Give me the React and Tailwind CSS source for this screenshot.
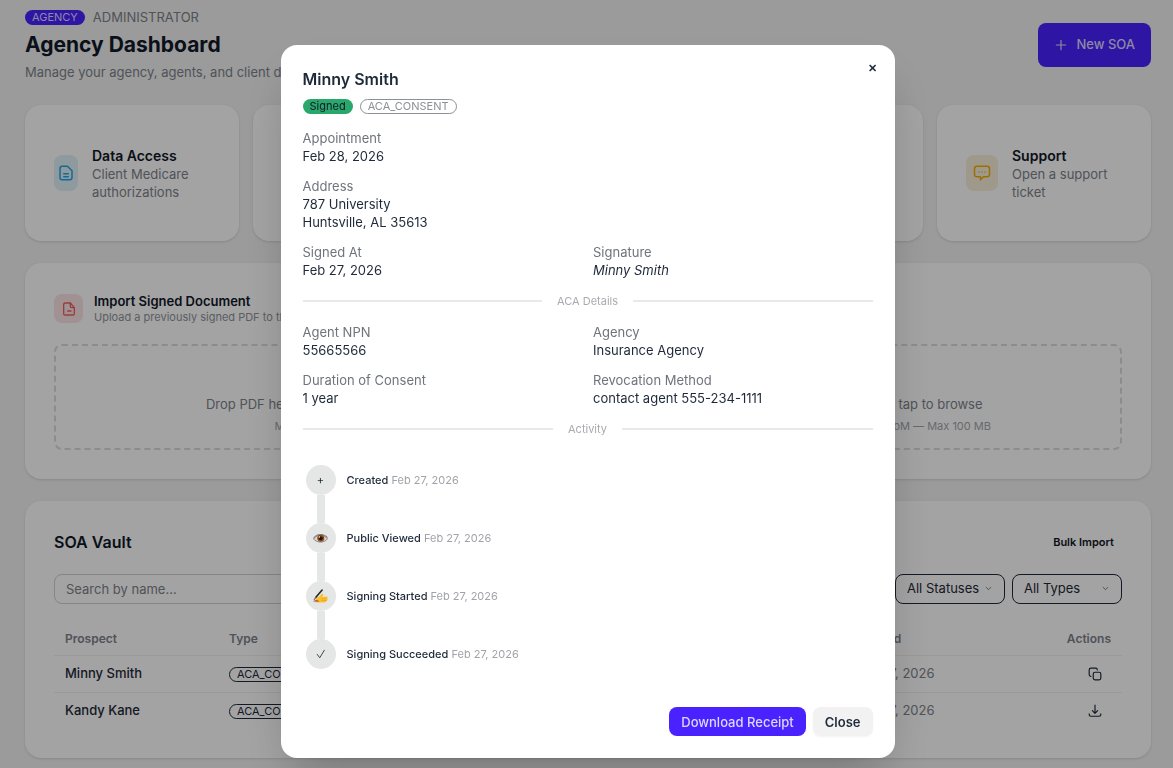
import React, { useState } from "react";

const details = [
  { label: "Signed At", value: "Feb 27, 2026" },
  { label: "Signature", value: "Minny Smith", italic: true },
];

const acaDetails = [
  { label: "Agent NPN", value: "55665566" },
  { label: "Agency", value: "Insurance Agency" },
  { label: "Duration of Consent", value: "1 year" },
  { label: "Revocation Method", value: "contact agent 555-234-1111" },
];

const activity = [
  { name: "Created", date: "Feb 27, 2026", icon: "plus" },
  { name: "Public Viewed", date: "Feb 27, 2026", icon: "eye" },
  { name: "Signing Started", date: "Feb 27, 2026", icon: "hand" },
  { name: "Signing Succeeded", date: "Feb 27, 2026", icon: "check" },
];

const prospects = [
  { name: "Minny Smith", type: "ACA_CONSENT", created: "Feb 27, 2026", action: "copy" },
  { name: "Kandy Kane", type: "ACA_CONSENT", created: "Feb 27, 2026", action: "download" },
];

function StrokeIcon({ children, className }) {
  return (
    <svg
      viewBox="0 0 24 24"
      fill="none"
      stroke="currentColor"
      strokeWidth="2"
      strokeLinecap="round"
      strokeLinejoin="round"
      className={className}
      aria-hidden="true"
    >
      {children}
    </svg>
  );
}

function FileTextIcon() {
  return (
    <StrokeIcon className="size-[18px] shrink-0">
      <path d="M7 3h7l6 6v9a3 3 0 0 1-3 3H7a3 3 0 0 1-3-3V6a3 3 0 0 1 3-3Z" />
      <path d="M9 13h6M9 17h6" />
    </StrokeIcon>
  );
}

function FileMinusIcon() {
  return (
    <StrokeIcon className="size-4 shrink-0">
      <path d="M14 3H6a2 2 0 0 0-2 2v14a2 2 0 0 0 2 2h12a2 2 0 0 0 2-2v-9Z" />
      <path d="M14 3v5a2 2 0 0 0 2 2h4M10 15h5" />
    </StrokeIcon>
  );
}

function ChatIcon() {
  return (
    <StrokeIcon className="size-[18px] shrink-0">
      <path d="M5 3h14a3 3 0 0 1 3 3v8a3 3 0 0 1-3 3h-5l-4 4v-4H5a3 3 0 0 1-3-3V6a3 3 0 0 1 3-3Z" />
      <path d="M8 10.500h.01M12 10.500h.01M16 10.500h.01" />
    </StrokeIcon>
  );
}

function CopyIcon() {
  return (
    <StrokeIcon className="size-[14px]">
      <rect x="9" y="9" width="13" height="13" rx="3" />
      <path d="M5 16a3 3 0 0 1-3-3V5a3 3 0 0 1 3-3h8a3 3 0 0 1 3 3" />
    </StrokeIcon>
  );
}

function DownloadIcon() {
  return (
    <StrokeIcon className="size-[14px]">
      <path d="M12 2v14M7.500 11.500 12 16l4.500-4.500M2 17v1a3 3 0 0 0 3 3h14a3 3 0 0 0 3-3v-1" />
    </StrokeIcon>
  );
}

function EyeIcon() {
  return (
    <svg viewBox="0 0 28 20" className="w-[15px]" aria-hidden="true">
      <path d="M1 11C6 3 20 1 27 11c-6 8-20 8-26 0Z" fill="#d9d5d2" stroke="#81766f" strokeWidth="1.500" />
      <path d="M1 10C6 1 21 0 27 9" fill="none" stroke="#8a7d75" strokeWidth="2" />
      <circle cx="14.500" cy="10" r="6.500" fill="#8a4b16" />
      <circle cx="14.500" cy="10" r="3.500" fill="#1d1310" />
      <circle cx="12" cy="7.500" r="1.200" fill="#fff" />
    </svg>
  );
}

function WritingHandIcon() {
  return (
    <svg viewBox="0 0 28 26" className="w-[15px]" aria-hidden="true">
      <path
        d="M4 22c1-4 4-7 8-8l4-5c2-1 4 1 3 3l-2 3 8-1c3 0 3 3 1 3.500 2 1 2 3 0 4 0 2-3 3.500-6 3.500H5Z"
        fill="#f9bf2c"
      />
      <path d="M16 18.500l9-1M16 21.500h9" stroke="#e09a1c" strokeWidth="1" />
      <path d="M0 23.500h12l-3-2.500H4Z" fill="#c43d35" />
      <path d="M5 16 17 2" stroke="#25292e" strokeWidth="3" strokeLinecap="round" />
      <path d="M2 20l3-4" stroke="#6b7076" strokeWidth="2" strokeLinecap="round" />
    </svg>
  );
}

function ActivityIcon({ type }) {
  if (type === "eye") return <EyeIcon />;
  if (type === "hand") return <WritingHandIcon />;
  if (type === "check")
    return (
      <StrokeIcon className="size-[10px]">
        <path d="M3 13l6 8L20 3" />
      </StrokeIcon>
    );
  return <span>+</span>;
}

function QuickCard({ title, text, color, icon }) {
  return (
    <div className="flex min-h-[136px] items-center gap-[14px] rounded-2xl bg-white p-[29px] shadow-sm">
      {title && (
        <>
          <div className={`flex h-9 items-center justify-center rounded-lg ${color}`}>{icon}</div>
          <div>
            <h2 className="text-[14px] leading-[19px] font-semibold text-gray-900">{title}</h2>
            <p className="text-[13px] leading-[18px] text-[#7d828a]">{text}</p>
          </div>
        </>
      )}
    </div>
  );
}

function DropZone({ text, hint }) {
  return (
    <div className="flex h-[106px] flex-col items-center justify-end rounded-lg border-2 border-dashed border-[#dcdcde] pb-[14px]">
      <p className="text-[13px] leading-5 text-[#7d828a]">{text}</p>
      <p className="mt-1 text-[11px] leading-4 text-[#a3a6ab]">{hint}</p>
    </div>
  );
}

function FilterSelect({ label, options }) {
  return (
    <div className="relative w-[110px] shrink-0">
      <select
        aria-label={label}
        className="h-[30px] w-full appearance-none rounded-lg border border-gray-800 bg-white pl-[11px] text-[13px] text-gray-800"
      >
        {options.map((o) => (
          <option key={o}>{o}</option>
        ))}
      </select>
      <StrokeIcon className="pointer-events-none absolute top-[11px] right-[13px] size-[7px] text-gray-800">
        <path d="M4 8l8 8 8-8" />
      </StrokeIcon>
    </div>
  );
}

function Divider({ children }) {
  return (
    <div className="flex items-center gap-[15px] text-[11px] leading-4 text-[#a9abaf]">
      <span className="h-[2px] flex-1 bg-[#e8e9ea]" />
      {children}
      <span className="h-[2px] flex-1 bg-[#e8e9ea]" />
    </div>
  );
}

function Field({ label, value, italic }) {
  return (
    <div>
      <dt className="text-[#6f747c]">{label}</dt>
      <dd className={italic ? "whitespace-pre-line italic" : "whitespace-pre-line"}>{value}</dd>
    </div>
  );
}

function DetailModal({ onClose }) {
  return (
    <div className="fixed inset-0 flex items-start justify-center bg-black/36 pt-[45px] pr-[22px] pl-6">
      <div
        role="dialog"
        aria-label="Minny Smith"
        className="relative w-full max-w-[614px] rounded-2xl bg-white p-[22px] text-[13px] leading-[18px] text-gray-800 shadow-2xl"
      >
        <button
          onClick={onClose}
          aria-label="Dismiss"
          className="absolute top-2 right-2 size-[29px] rounded-full text-[11px] font-bold"
        >
          ✕
        </button>
        <h3 className="text-[16px] leading-6 font-semibold">Minny Smith</h3>
        <div className="mt-2 flex gap-[7px] text-[11px] leading-[15px]">
          <span className="rounded-full bg-[#2aa86b] px-[7px] text-gray-900">Signed</span>
          <span className="rounded-full border border-[#8d9096] px-[7px] leading-[13px] text-[#8d9096]">
            ACA_CONSENT
          </span>
        </div>

        <dl className="mt-[15px] grid grid-cols-2 gap-x-[11px] gap-y-3">
          <div className="col-span-2">
            <Field label="Appointment" value="Feb 28, 2026" />
          </div>
          <div className="col-span-2">
            <Field label="Address" value={"787 University\nHuntsville, AL 35613"} />
          </div>
          {details.map((d) => (
            <Field key={d.label} {...d} />
          ))}
        </dl>

        <div className="my-[14px]">
          <Divider>ACA Details</Divider>
        </div>
        <dl className="grid grid-cols-2 gap-x-[11px] gap-y-3">
          {acaDetails.map((d) => (
            <Field key={d.label} {...d} />
          ))}
        </dl>
        <div className="my-[14px]">
          <Divider>Activity</Divider>
        </div>

        <ul className="mt-7 ml-[3px] text-[11px]">
          {activity.map((a, i) => (
            <li key={a.name}>
              {i > 0 && <div className="ml-[11px] h-7 w-2 bg-[#e5e6e6]" />}
              <div className="flex items-center gap-[11px]">
                <span className="flex size-[30px] items-center justify-center rounded-full bg-[#e5e6e6]">
                  <ActivityIcon type={a.icon} />
                </span>
                <p>
                  <span className="font-medium">{a.name}</span>{" "}
                  <span className="text-[#a0a3a8]">{a.date}</span>
                </p>
              </div>
            </li>
          ))}
        </ul>

        <div className="mt-[38px] flex justify-end gap-[7px] font-semibold">
          <button className="h-[29px] rounded-lg bg-[#4a22ff] px-3 font-medium text-[#dcd8ff]">
            Download Receipt
          </button>
          <button onClick={onClose} className="h-[29px] rounded-lg bg-[#f2f2f2] px-3 shadow-xs">
            Close
          </button>
        </div>
      </div>
    </div>
  );
}

export default function App() {
  const [open, setOpen] = useState(true);

  return (
    <div className="min-h-screen bg-[#f2f2f2] pt-2 pr-[22px] pb-2 pl-[25px] font-['Inter',sans-serif] text-gray-800">
      <header className="flex items-center justify-between">
        <div>
          <div className="flex items-center gap-2">
            <span className="rounded-full bg-[#4a22ff] px-[7px] text-[11px] leading-[15px] text-[#dcd8ff]">
              AGENCY
            </span>
            <span className="text-[13px] leading-[18px] text-[#7d828a]">ADMINISTRATOR</span>
          </div>
          <h1 className="text-[21px] leading-[37px] font-bold text-gray-900">Agency Dashboard</h1>
          <p className="text-[13px] leading-[19px] text-[#7d828a]">
            Manage your agency, agents, and client data
          </p>
        </div>
        <button className="flex h-11 items-center gap-2 rounded-lg bg-[#4a22ff] px-4 text-[13px] font-medium text-[#dcd8ff]">
          <StrokeIcon className="size-[14px]">
            <path d="M12 4v16M4 12h16" />
          </StrokeIcon>
          New SOA
        </button>
      </header>

      <section className="mt-[23px] grid grid-cols-5 gap-[14px]">
        <QuickCard
          title="Data Access"
          text="Client Medicare authorizations"
          color="w-6 shrink-0 bg-[#dff1f8] text-[#22a6e8]"
          icon={<FileTextIcon />}
        />
        <QuickCard />
        <QuickCard />
        <QuickCard />
        <QuickCard
          title="Support"
          text="Open a support ticket"
          color="w-8 shrink-0 bg-[#f8f0d8] text-[#f5ae08]"
          icon={<ChatIcon />}
        />
      </section>

      <section className="mt-[22px] grid grid-cols-2 gap-[14px]">
        <div className="rounded-2xl bg-white p-[29px] shadow-sm">
          <div className="mb-[19px] flex items-center gap-[11px]">
            <div className="flex h-[33px] w-[29px] items-center">
              <div className="flex size-[29px] items-center justify-center rounded-lg bg-[#fae3e6] text-[#f0605f]">
                <FileMinusIcon />
              </div>
            </div>
            <div>
              <h2 className="text-[13px] leading-[18px] font-semibold text-gray-900">
                Import Signed Document
              </h2>
              <p className="text-[11px] leading-[15px] text-[#8f9399]">
                Upload a previously signed PDF to the vault
              </p>
            </div>
          </div>
          <DropZone text="Drop PDF here or tap to browse" hint="Max 10 MB" />
        </div>
        <div className="flex flex-col justify-end rounded-2xl bg-white p-[29px] shadow-sm">
          <DropZone
            text="Drop MP3 file here or tap to browse"
            hint="MP3, WAV, M4A, OGG, WebM — Max 100 MB"
          />
        </div>
      </section>

      <section className="mt-[22px] rounded-2xl bg-white p-[29px] shadow-sm">
        <div className="flex items-center justify-between">
          <h2 className="text-[16px] leading-6 font-semibold text-gray-900">SOA Vault</h2>
          <button className="px-2 text-[11px] font-semibold text-gray-900">Bulk Import</button>
        </div>
        <div className="mt-5 flex gap-[7px]">
          <input
            type="text"
            aria-label="Search by name"
            placeholder="Search by name..."
            className="h-[30px] min-w-0 flex-1 rounded-lg border border-[#cfd0d2] px-[11px] text-[13px] placeholder:text-[#7d828a]"
          />
          <FilterSelect label="Status" options={["All Statuses", "Signed", "Pending"]} />
          <FilterSelect label="Type" options={["All Types", "ACA_CONSENT"]} />
        </div>
        <table className="mt-5 w-full table-fixed text-left text-[13px]">
          <thead className="text-[12px] text-[#7d828a]">
            <tr className="h-[31px] border-b border-[#f0f0f1]">
              <th className="w-[164px] px-[11px] font-semibold">Prospect</th>
              <th className="px-[11px] font-semibold">Type</th>
              <th className="w-[124px] px-[11px] font-semibold">Created</th>
              <th className="w-[154px] px-[11px] text-right font-semibold">Actions</th>
            </tr>
          </thead>
          <tbody>
            {prospects.map((p) => (
              <tr key={p.name} className="h-[37px] border-b border-[#f0f0f1] last:border-0">
                <td className="px-[11px] font-medium">{p.name}</td>
                <td className="px-[11px]">
                  <span className="inline-block rounded-full border border-gray-800 px-[7px] align-middle text-[11px] leading-[13px]">
                    {p.type}
                  </span>
                </td>
                <td className="px-[11px] text-[#7d828a]">{p.created}</td>
                <td className="px-5">
                  <button aria-label={p.action} className="ml-auto block">
                    {p.action === "copy" ? <CopyIcon /> : <DownloadIcon />}
                  </button>
                </td>
              </tr>
            ))}
          </tbody>
        </table>
      </section>

      {open && <DetailModal onClose={() => setOpen(false)} />}
    </div>
  );
}
